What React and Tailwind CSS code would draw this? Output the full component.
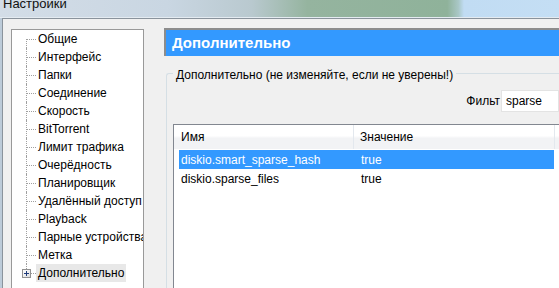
import React from "react";

const treeItems = [
  "Общие",
  "Интерфейс",
  "Папки",
  "Соединение",
  "Скорость",
  "BitTorrent",
  "Лимит трафика",
  "Очерёдность",
  "Планировщик",
  "Удалённый доступ",
  "Playback",
  "Парные устройства",
  "Метка",
  "Дополнительно",
];

const rows = [
  { name: "diskio.smart_sparse_hash", value: "true", selected: true },
  { name: "diskio.sparse_files", value: "true", selected: false },
];

function TreeRow({ label, index, last }) {
  return (
    <div className="flex h-[18px] items-center">
      {/* connector column: dotted lines like a classic win32 tree */}
      <div className="relative h-full w-[24px] shrink-0">
        <div
          className={`absolute left-[14px] w-0 border-l border-dotted border-[#a0a0a0] ${
            index === 0 ? "top-[9px] bottom-0" : last ? "top-0 h-[5px]" : "top-0 bottom-0"
          }`}
        />
        <div className="absolute left-[15px] top-[9px] h-0 w-[9px] border-t border-dotted border-[#a0a0a0]" />
        {last && (
          <div className="absolute left-[10px] top-[5px] flex h-[9px] w-[9px] items-center justify-center border border-[#919191] bg-gradient-to-br from-white to-[#dcdcdc]">
            <div className="relative h-[5px] w-[5px]">
              <div className="absolute left-0 top-[2px] h-px w-[5px] bg-[#1f3b7a]" />
              <div className="absolute left-[2px] top-0 h-[5px] w-px bg-[#1f3b7a]" />
            </div>
          </div>
        )}
      </div>
      <span
        className={`whitespace-nowrap px-[2px] leading-[18px] ${
          last ? "bg-[#e8e8e8]" : ""
        }`}
      >
        {label}
      </span>
    </div>
  );
}

export default function App() {
  return (
    <div className="relative h-[288px] w-[559px] overflow-hidden bg-[#c3d3e2] font-['Segoe_UI','Liberation_Sans',sans-serif] text-[12px] text-black">
      {/* aero title bar */}
      <div className="h-[17px] overflow-hidden bg-[linear-gradient(90deg,#d3dde7_0%,#c9d6e2_30%,#b9c9cf_45%,#95b49f_55%,#8fb29a_80%,#a9c7c6_82%,#c1dcf3_83%,#c4def4_100%)]">
        <div className="-translate-y-[4px] pl-[3px] text-[13px] leading-[16px] text-[#111]">Настройки</div>
      </div>
      <div className="h-[1px] bg-[#e4ebf1]" />
      <div className="flex h-full">
        <div className="w-[2px] shrink-0 bg-[#bccbd9]" />
        <div className="flex h-full min-w-0 flex-1 border-l border-t border-[#8a939c] bg-[#f0f0f0] pl-[8px] pt-[9px]">
          {/* settings tree */}
          <div className="mt-[1px] h-full w-[133px] shrink-0 overflow-hidden border border-[#999] bg-white">
            {treeItems.map((item, i) => (
              <TreeRow key={item} label={item} index={i} last={i === treeItems.length - 1} />
            ))}
          </div>

          {/* right panel */}
          <div className="ml-[20px] flex min-w-0 flex-1 flex-col">
            <div className="flex h-[28px] items-center border-l-2 border-t-2 border-[#8c8c8c] bg-[#3399ff] pl-[6px] text-[15px] font-bold text-white">
              Дополнительно
            </div>

            <div className="relative ml-[2px] mt-[17px] min-w-0 flex-1 rounded-tl-[3px] border-l border-t border-[#d5dfe5]">
              <div className="absolute -top-[6px] left-[6px] whitespace-nowrap bg-[#f0f0f0] px-[3px] leading-[15px]">
                Дополнительно (не изменяйте, если не уверены!)
              </div>

              <div className="mt-[16px] flex items-center justify-end gap-[1px]">
                <span>Фильт</span>
                <div className="flex h-[22px] w-[58px] shrink-0 items-center border border-[#e3e3e3] bg-white pl-[4px]">
                  sparse
                </div>
              </div>

              {/* advanced settings list */}
              <div className="ml-[6px] mt-[12px] h-full w-[400px] border-l border-t border-[#828790] bg-white">
                <div className="flex h-[24px] bg-[linear-gradient(180deg,#ffffff_0%,#ffffff_45%,#f2f3f5_55%,#f2f3f5_100%)]">
                  <div className="flex w-[180px] items-center border-r border-[#e3e8ee] pl-[7px]">Имя</div>
                  <div className="flex w-[201px] items-center border-r border-[#e3e8ee] pl-[6px]">Значение</div>
                </div>
                <div className="pl-[5px] pt-[1px]">
                  {rows.map((r) => (
                    <div
                      key={r.name}
                      className={`flex h-[19px] w-[375px] items-center ${
                        r.selected ? "bg-[#3399ff] text-white" : ""
                      }`}
                    >
                      <div className="w-[175px] pl-[2px]">{r.name}</div>
                      <div className="pl-[7px]">{r.value}</div>
                    </div>
                  ))}
                </div>
              </div>
            </div>
          </div>
        </div>
      </div>
    </div>
  );
}
